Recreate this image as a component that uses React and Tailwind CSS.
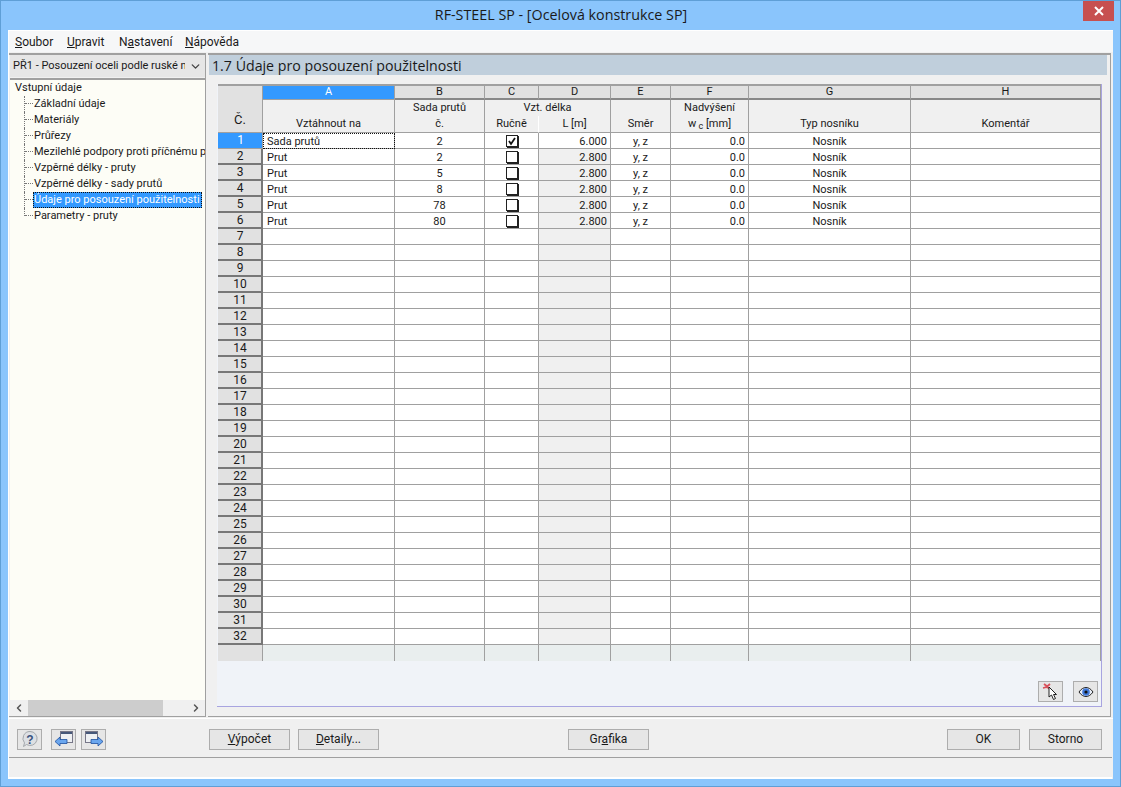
import { ChevronDown, ChevronLeft, ChevronRight } from 'lucide-react';

const treeItems = [
    'Základní údaje',
    'Materiály',
    'Průřezy',
    'Mezilehlé podpory proti příčnému pohybu',
    'Vzpěrné délky - pruty',
    'Vzpěrné délky - sady prutů',
    'Údaje pro posouzení použitelnosti',
    'Parametry - pruty',
];

const rows = [
    { type: 'Sada prutů', no: '2', checked: true, len: '6.000' },
    { type: 'Prut', no: '2', len: '2.800' },
    { type: 'Prut', no: '5', len: '2.800' },
    { type: 'Prut', no: '8', len: '2.800' },
    { type: 'Prut', no: '78', len: '2.800' },
    { type: 'Prut', no: '80', len: '2.800' },
];

const letters = ['B', 'C', 'D', 'E', 'F', 'G', 'H'];
const emptyRows = Array.from({ length: 26 }, (_, i) => i + 7);
const gridCols = 'grid grid-cols-[45px_132px_90px_54px_72px_60px_78px_162px_190px]';
const cell = 'h-4 border-r border-b border-[#a0a0a0] leading-[17px]';

function Button({ children, className = '' }) {
    return (
        <button className={`h-[21px] border border-[#adadad] bg-[#e6e6e6] text-center text-[12px] leading-[18px] ${className}`}>
            {children}
        </button>
    );
}

function IconButton({ children, className = '' }) {
    return (
        <button className={`flex h-[21px] w-[25px] items-center justify-center border border-[#adadad] bg-[#e6e6e6] ${className}`}>
            {children}
        </button>
    );
}

function CheckBox({ checked }) {
    return (
        <span className="mx-auto mt-[2px] flex h-[12px] w-[12px] items-center justify-center border border-[#222] bg-white shadow-[1px_1px_0_#222]">
            {checked && (
                <svg width="10" height="10" viewBox="0 0 10 10">
                    <path d="M2 5l2 3 4-6" fill="none" stroke="#111" strokeWidth="1.8" />
                </svg>
            )}
        </span>
    );
}

function RowNumber({ n, active }) {
    if (active) {
        return <div className="h-4 border-r border-b border-[#a0a0a0] bg-[#3399ff] pl-px text-center text-[12px] leading-[14px] text-white">{n}</div>;
    }
    return <div className="h-4 border-r-2 border-b-2 border-r-[#777] border-b-[#777] bg-[#e1e1e1] pl-px text-center text-[12px] leading-[14px]">{n}</div>;
}

function HelpIcon() {
    return (
        <svg width="18" height="18" viewBox="0 0 18 18">
            <path d="M9 1.500a7 7 0 1 1-3.500 13L2.500 16.500l1-3.600A7 7 0 0 1 9 1.500z" fill="#dde0e4" stroke="#a4a8ac" />
            <text x="9" y="13.500" textAnchor="middle" fontSize="12" fontWeight="700" fontFamily="Liberation Sans, sans-serif" fill="#39527e">?</text>
        </svg>
    );
}

function ArrowLeftIcon() {
    return (
        <svg width="20" height="18" viewBox="0 0 20 18">
            <rect x="6.500" y="1.500" width="12" height="11" fill="#eef0f3" stroke="#778" />
            <rect x="7" y="2" width="11" height="2" fill="#46587a" />
            <path d="M1 11.500l5-4.500v2.500h7v4H6V16z" fill="#6aa6ee" stroke="#1d4f9e" strokeWidth="0.8" />
        </svg>
    );
}

function ArrowRightIcon() {
    return (
        <svg width="20" height="18" viewBox="0 0 20 18">
            <rect x="1.500" y="1.500" width="12" height="11" fill="#eef0f3" stroke="#778" />
            <rect x="2" y="2" width="11" height="2" fill="#46587a" />
            <path d="M19 11.500L14 7v2.500H7v4h7V16z" fill="#6aa6ee" stroke="#1d4f9e" strokeWidth="0.8" />
        </svg>
    );
}

function PickIcon() {
    return (
        <svg width="20" height="18" viewBox="0 0 20 18">
            <path d="M3 1l4 3M9 1L5 4.500M2 5l4-1 3 2" fill="none" stroke="#d9505a" strokeWidth="1.800" />
            <path d="M8 4v10l2.500-2 2 4.500 2-1-2-4h3z" fill="#fff" stroke="#222" />
        </svg>
    );
}

function EyeIcon() {
    return (
        <svg width="16" height="12" viewBox="0 0 16 12">
            <path d="M1 6c2-3 4.500-4.500 7-4.500S13 3 15 6c-2 3-4.500 4.500-7 4.500S3 9 1 6z" fill="#e8eef8" stroke="#222" />
            <circle cx="8" cy="6" r="3.800" fill="#3f78d8" />
            <circle cx="8" cy="6" r="1.600" fill="#111" />
        </svg>
    );
}

export default function App() {
    return (
        <div className="flex h-[787px] w-[1121px] flex-col overflow-hidden border border-[#5f9fd6] bg-[#8ac5fc] font-['Roboto','Open_Sans',sans-serif] text-[11px] text-[#1a1a1a]">
            {/* title bar */}
            <div className="flex h-[29px] shrink-0 items-start pl-[38px] pr-[6px]">
                <div className="flex-1 pt-[4px] text-center font-['Open_Sans',sans-serif] text-[14.3px] leading-5 text-[#1a1a1a]">RF-STEEL SP - [Ocelová konstrukce SP]</div>
                <div className="flex h-[20px] w-[31px] items-center justify-center bg-[#c75050]">
                    <svg width="10" height="10" viewBox="0 0 10 10">
                        <path d="M1 1l8 8M9 1l-8 8" stroke="#fff" strokeWidth="2" />
                    </svg>
                </div>
            </div>

            <div className="mx-[7px] mb-[7px] flex min-h-0 flex-1 flex-col border-l border-t border-white bg-[#f0f0f0]">
                {/* menu */}
                <div className="flex h-[21px] shrink-0 items-center bg-[#f6f7f8] pl-[6px] text-[12px]">
                    <span className="w-[52px]"><u>S</u>oubor</span>
                    <span className="w-[52px]"><u>U</u>pravit</span>
                    <span className="w-[66px]">N<u>a</u>stavení</span>
                    <span><u>N</u>ápověda</span>
                </div>

                <div className="flex h-[666px] shrink-0 gap-[2px] pt-[1px]">
                    {/* left panel */}
                    <div className="flex h-[664px] w-[197px] shrink-0 flex-col border-t-2 border-r border-b border-[#a0a0a0] bg-[#f0f0f0] pl-px">
                        <div className="flex h-[22px] shrink-0 items-center justify-between bg-[#e6e6e6] pl-[3px] pr-[3px]">
                            <span className="w-[172px] overflow-hidden whitespace-nowrap">PŘ1 - Posouzení oceli podle ruské normy</span>
                            <ChevronDown size={13} strokeWidth={2.5} className="text-[#444]" />
                        </div>
                        <div className="mt-[1px] flex min-h-0 flex-1 flex-col border-t-2 border-[#a0a0a0] bg-[#fdfdf6]">
                            <div className="min-h-0 flex-1 overflow-hidden pl-[5px]">
                                <div className="h-4 leading-4">Vstupní údaje</div>
                                <div className="pl-[9px]">
                                    {treeItems.map((item, i) => (
                                        <div key={item} className="flex h-4 items-stretch whitespace-nowrap">
                                            <div className={`w-[9px] shrink-0 border-l border-dotted border-[#777] ${i === treeItems.length - 1 ? 'h-[8px]' : ''}`}>
                                                <div className="h-[8px] border-b border-dotted border-[#777]"></div>
                                            </div>
                                            {i === 6 ? (
                                                <span className="h-[16px] border border-dotted border-[#111] bg-[#3399ff] pr-[1px] leading-[14px] text-white">{item}</span>
                                            ) : (
                                                <span className="pl-px leading-4">{item}</span>
                                            )}
                                        </div>
                                    ))}
                                </div>
                            </div>
                            <div className="flex h-[16px] shrink-0 items-center bg-[#f0f0f0]">
                                <ChevronLeft size={12} strokeWidth={3} className="ml-[3px] w-[12px] text-[#555]" />
                                <div className="ml-[3px] h-full w-[135px] bg-[#cdcdcd]"></div>
                                <div className="flex-1"></div>
                                <ChevronRight size={12} strokeWidth={3} className="mr-[3px] text-[#555]" />
                            </div>
                        </div>
                    </div>

                    {/* right panel */}
                    <div className="flex h-[664px] w-[903px] shrink-0 flex-col border-t-2 border-r border-b border-[#a0a0a0] bg-[#f0f0f0] pl-px">
                        <div className="h-[20px] w-[898px] shrink-0 bg-[#c0cfdc] pl-[3px] font-['Open_Sans',sans-serif] text-[14.2px] leading-[21px] text-[#1a1a1a]">
                            1.7 Údaje pro posouzení použitelnosti
                        </div>
                        <div className="ml-[8px] mt-[9px] flex h-[623px] w-[885px] flex-col border-r border-b border-[#a8a4e0] bg-[#f0f3f8] pl-px">
                            {/* table */}
                            <div className={`${gridCols} grid-rows-[14px_16px_17px] border-t-2 border-[#a0a0a0] bg-[#f0f0f0] text-center`}>
                                <div className="row-span-3 flex items-end justify-center border-r border-b border-[#a0a0a0] bg-[#e1e1e1] pb-[3px] text-[13px]">Č.</div>
                                <div className="border-r border-b border-[#a0a0a0] bg-[#3399ff] leading-[12px] text-white">A</div>
                                {letters.map((l) => (
                                    <div key={l} className="border-r border-b-2 border-r-[#a0a0a0] border-b-[#888] bg-[#e1e1e1] leading-[12px]">{l}</div>
                                ))}

                                <div className="row-span-2 flex items-end justify-center border-r border-b border-[#a0a0a0]">Vztáhnout na</div>
                                <div className="border-r border-[#a0a0a0] leading-[15px]">Sada prutů</div>
                                <div className="col-span-2 border-r border-[#a0a0a0] leading-[15px]">Vzt. délka</div>
                                <div className="row-span-2 flex items-end justify-center border-r border-b border-[#a0a0a0]">Směr</div>
                                <div className="border-r border-[#a0a0a0] leading-[15px]">Nadvýšení</div>
                                <div className="row-span-2 flex items-end justify-center border-r border-b border-[#a0a0a0]">Typ nosníku</div>
                                <div className="row-span-2 flex items-end justify-center border-r border-b border-[#a0a0a0]">Komentář</div>

                                <div className="border-r border-b border-[#a0a0a0] leading-[16px]">č.</div>
                                <div className="border-r border-b border-r-[#ffffff] border-b-[#a0a0a0] leading-[16px]">Ručně</div>
                                <div className="border-r border-b border-[#a0a0a0] leading-[16px]">L [m]</div>
                                <div className="border-r border-b border-[#a0a0a0] leading-[16px]">w<sub className="text-[9px]"> c</sub> [mm]</div>
                            </div>
                            <div className={`${gridCols} bg-white`}>
                                {rows.map((r, i) => (
                                    <div key={i} className="contents">
                                        <RowNumber n={i + 1} active={i === 0} />
                                        <div className={`${cell} pl-[4px] ${i === 0 ? 'outline-1 -outline-offset-1 outline-dotted outline-[#111]' : ''}`}>{r.type}</div>
                                        <div className={`${cell} text-center`}>{r.no}</div>
                                        <div className={cell}><CheckBox checked={r.checked} /></div>
                                        <div className={`${cell} pr-[3px] text-right ${i === 0 ? '' : 'bg-[#f0f0f0]'}`}>{r.len}</div>
                                        <div className={`${cell} text-center`}>y, z</div>
                                        <div className={`${cell} pr-[3px] text-right`}>0.0</div>
                                        <div className={`${cell} text-center`}>Nosník</div>
                                        <div className={cell}></div>
                                    </div>
                                ))}
                                {emptyRows.map((n) => (
                                    <div key={n} className="contents">
                                        <RowNumber n={n} />
                                        <div className={cell}></div>
                                        <div className={cell}></div>
                                        <div className={cell}></div>
                                        <div className={`${cell} bg-[#f0f0f0]`}></div>
                                        <div className={cell}></div>
                                        <div className={cell}></div>
                                        <div className={cell}></div>
                                        <div className={cell}></div>
                                    </div>
                                ))}
                                <div className="h-4 border-r border-[#a0a0a0] bg-[#e1e1e1]"></div>
                                {letters.concat('A').map((l) => (
                                    <div key={l} className="h-4 border-r border-[#a0a0a0] bg-[#e9eeee]"></div>
                                ))}
                            </div>
                            <div className="flex flex-1 items-end justify-end gap-[10px] pb-[4px] pr-[3px]">
                                <IconButton><PickIcon /></IconButton>
                                <IconButton><EyeIcon /></IconButton>
                            </div>
                        </div>
                    </div>
                </div>

                {/* bottom buttons */}
                <div className="flex h-[39px] shrink-0 items-center border-t border-white pl-[8px] pr-[10px] pt-[2px]">
                    <IconButton><HelpIcon /></IconButton>
                    <IconButton className="ml-[9px]"><ArrowLeftIcon /></IconButton>
                    <IconButton className="ml-[5px]"><ArrowRightIcon /></IconButton>
                    <Button className="ml-[103px] w-[81px]"><u>V</u>ýpočet</Button>
                    <Button className="ml-[8px] w-[81px]"><u>D</u>etaily...</Button>
                    <Button className="ml-[189px] w-[81px]">Gr<u>a</u>fika</Button>
                    <Button className="ml-[298px] w-[73px] border-[#3399ff]">OK</Button>
                    <Button className="ml-[9px] w-[73px]">Storno</Button>
                </div>
                {/* status bar */}
                <div className="mr-[1px] min-h-0 flex-1 border-t border-[#a0a0a0] border-b-2 border-b-white bg-[#f0f0f0]"></div>
            </div>
        </div>
    );
}
